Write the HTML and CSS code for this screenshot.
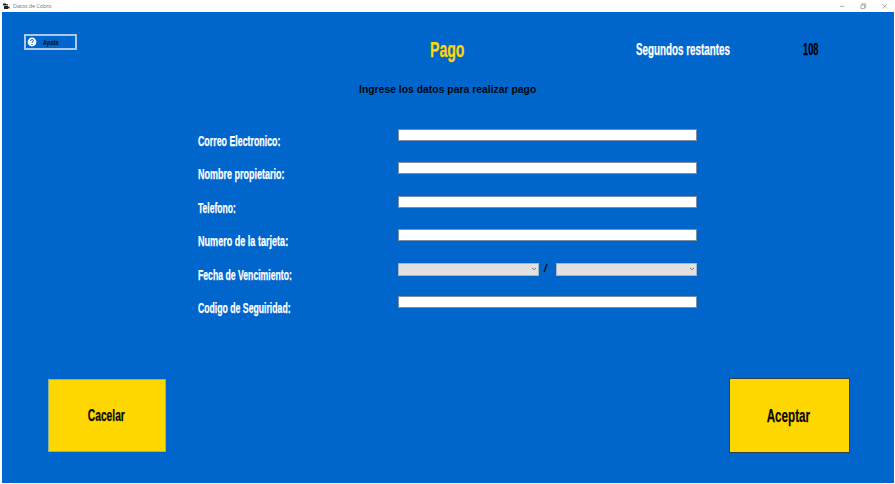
FILE: index.html
```html
<!DOCTYPE html>
<html lang="es">
<head>
<meta charset="utf-8">
<title>Datos de Cobro</title>
<link rel="stylesheet" href="styles.css">
</head>
<body>
<header class="titlebar">
  <svg class="app-icon" viewBox="0 0 7 7"><path d="M0 .5h3v2H0zM3.2 1h1.6v1.6H3.2zM1 3h4v3H1zM5 4l1.5-.8v2.6L5 5z" fill="#222"/></svg>
  <span class="caption">Datos de Cobro</span>
  <svg class="controls" viewBox="0 0 50 8" fill="none" stroke="#929292" stroke-width=".7"><path d="M1 4.3h4.5M22 3h3.5v3.5H22zM23 3V1.8h3.7v3.5h-1.2M43.5 2l4.5 4.5M48 2l-4.5 4.5"/></svg>
</header>
<main class="window">
  <div class="top">
    <button class="help"><svg viewBox="0 0 10 10"><circle cx="5" cy="5" r="4.4" fill="#fff"/><path d="M3.6 4q0-1.5 1.5-1.5T6.5 3.8Q6.5 4.6 5 5.3v.7M5 7v1" fill="none" stroke="#06c"/></svg><span class="t t-help">Ayuda</span></button>
    <h1 class="t t-title">Pago</h1>
    <span class="t t-seconds">Segundos restantes</span>
    <span class="t t-count">108</span>
  </div>
  <p class="intro">Ingrese los datos para realizar pago</p>
  <form class="form">
    <label class="t l1">Correo Electronico:</label><div class="field"></div>
    <label class="t l2">Nombre propietario:</label><div class="field"></div>
    <label class="t l3">Telefono:</label><div class="field"></div>
    <label class="t l4">Numero de la tarjeta:</label><div class="field"></div>
    <label class="t l5">Fecha de Vencimiento:</label>
    <div class="dates">
      <div class="combo"><svg viewBox="0 0 6 4"><path d="M1 1l2 1.7L5 1"/></svg></div>
      <span class="slash">/</span>
      <div class="combo"><svg viewBox="0 0 6 4"><path d="M1 1l2 1.7L5 1"/></svg></div>
    </div>
    <label class="t l6">Codigo de Seguiridad:</label><div class="field"></div>
  </form>
  <div class="actions">
    <button class="cancel"><span class="t t-cancel">Cacelar</span></button>
    <button class="accept"><span class="t t-accept">Aceptar</span></button>
  </div>
</main>
</body>
</html>
```
FILE: styles.css
```css
* { box-sizing: border-box; }
body { margin: 0; width: 895px; height: 484px; overflow: hidden; background: #fff; font-family: "Liberation Sans", Arial, sans-serif; }
h1, p { margin: 0; }
button { padding: 0; margin: 0; font-family: inherit; border-radius: 0; }
.titlebar { height: 12px; display: flex; align-items: center; padding: 0 6px 0 3px; }
.app-icon { width: 7px; height: 7px; margin-right: 3px; }
.caption { font: 5.6px "Open Sans", sans-serif; letter-spacing: -.15px; color: #777; flex: 1; }
.controls { width: 50px; height: 8px; }
.window { height: 471px; margin: 0 1px 0 2px; background: #0066cc; overflow: hidden; }

.t { display: block; font-weight: 700; white-space: nowrap; transform-origin: 0 50%; transform: scaleX(var(--sx)); color: #fff; -webkit-text-stroke: .25px currentColor; }
.top { display: grid; grid-template-columns: 405.5px 206.5px 166.5px auto; padding: 22px 0 0 22px; height: 71px; line-height: 31px; }
.help { width: 53px; height: 16px; border: 2px solid #a9c9ec; background: #0066cc; display: flex; align-items: center; }
.help svg { width: 10px; height: 10px; margin: 0 6px 0 1px; }
.help .t { line-height: 12px; margin-top: 2px; -webkit-text-stroke: 0; }
.t-help { font-size: 7px; color: #001020; --sx: .72; }
.t-title { font-size: 22px; color: #ffd700; --sx: .641; line-height: 31px; }
.t-seconds { font-size: 16.3px; --sx: .604; }
.t-count { font-size: 16.5px; color: #000; --sx: .563; }
.intro { font-size: 10.4px; font-weight: 700; line-height: 14px; color: #00080f; width: 177px; margin-left: 357px; white-space: nowrap; }

.form { display: grid; grid-template-columns: 200px 299px; grid-auto-rows: 33.4px; padding: 32px 0 0 196px; height: 269px; }
.form .t { font-size: 14.7px; line-height: 24px; }
.l1 { --sx: .601; }
.l2 { --sx: .612; }
.l3 { --sx: .582; }
.l4 { --sx: .617; }
.l5 { --sx: .59; }
.l6 { --sx: .591; }
.field { height: 12px; background: #fff; border: 1px solid #7a8fa8; }
.dates { display: flex; justify-content: space-between; }
.combo { width: 141px; height: 13px; background: #e1e1e1; border: 1px solid #a9b4c0; display: flex; justify-content: flex-end; align-items: center; }
.combo svg { width: 6px; height: 4px; margin-right: 1px; fill: none; stroke: #666; stroke-width: .8; }
.slash { font-size: 10px; font-weight: 700; font-style: italic; line-height: 11px; margin-right: 4px; }

.actions { display: flex; justify-content: space-between; align-items: center; padding: 0 44px 0 46px; margin-top: 12px; }
.cancel, .accept { background: #ffd700; display: flex; align-items: center; justify-content: center; }
.cancel { width: 118px; height: 73px; border: 1px solid #8bb390; }
.accept { width: 121px; height: 75px; border: 1px solid #31424d; }
.actions .t { transform-origin: 50% 50%; color: #0a0a00; margin-right: 1.5px; }
.t-cancel { font-size: 16.8px; --sx: .61; }
.t-accept { font-size: 19px; --sx: .612; }
```
